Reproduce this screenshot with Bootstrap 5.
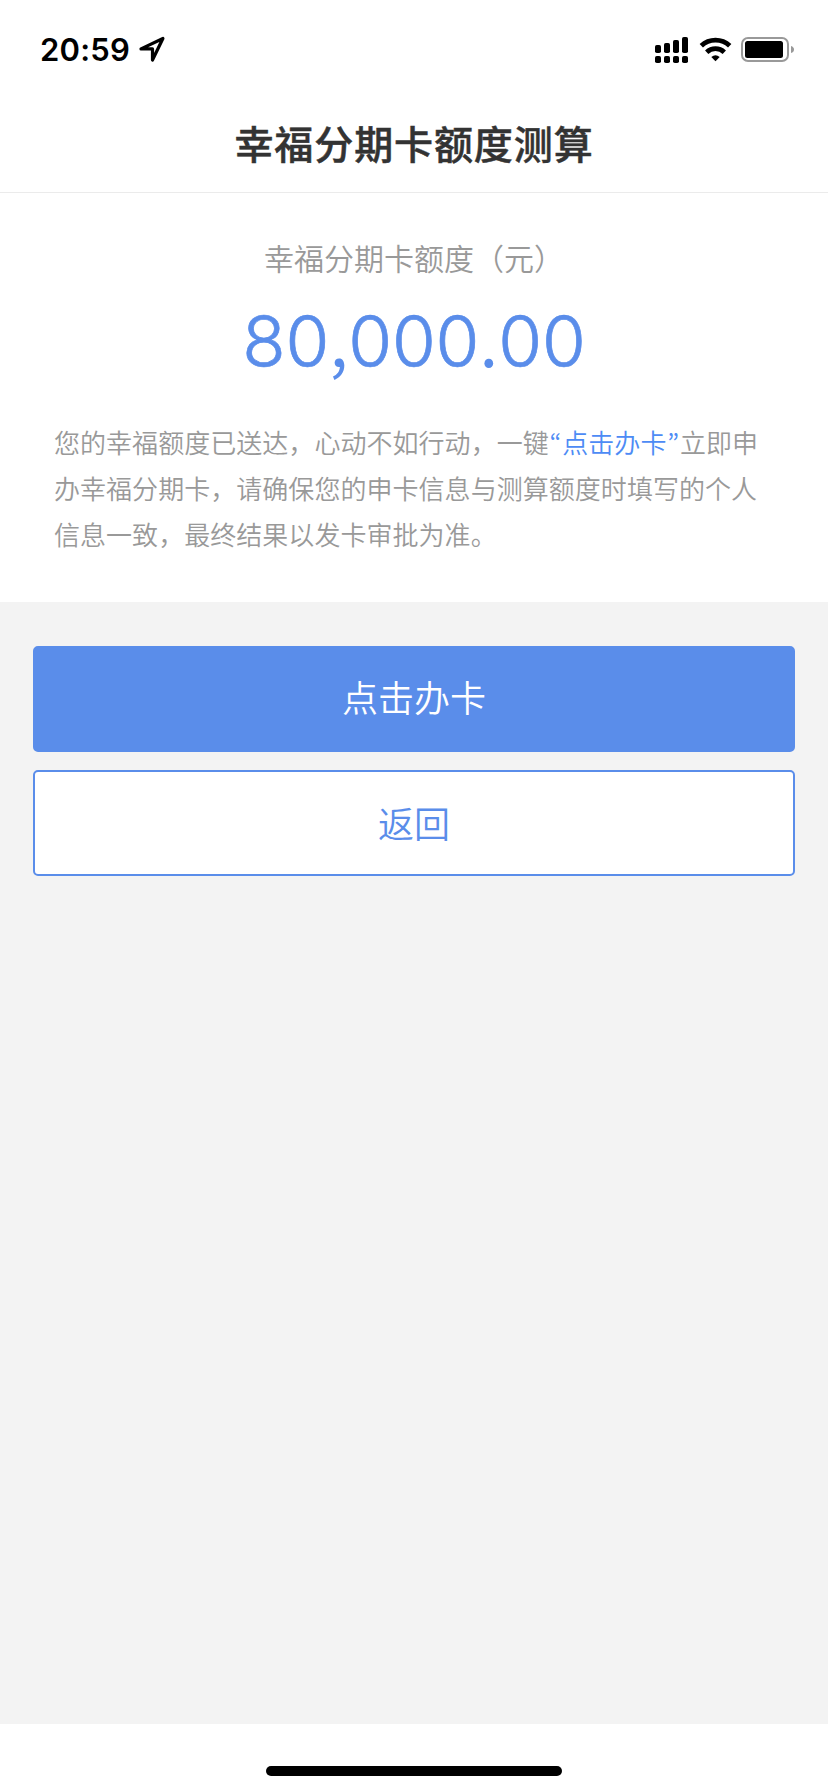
<!DOCTYPE html>
<html lang="zh-CN">
<head>
<meta charset="utf-8">
<meta name="viewport" content="width=device-width, initial-scale=1">
<title>幸福分期卡额度测算</title>
<link href="https://cdn.jsdelivr.net/npm/bootstrap@5.3.0/dist/css/bootstrap.min.css" rel="stylesheet">
<style>
  :root { --brand: #5a8dea; }
  body { font-family: "Noto Sans CJK SC", sans-serif; background: #f3f3f3; height: 1792px; overflow: hidden; }
  .status-bar { height: 96px; padding: 2px 34px 0 40px; color: #000; }
  .clock { font: 600 31px/1 Inter, sans-serif; letter-spacing: .2px; }
  .page-head { height: 97px; border-bottom: 1px solid #ebebeb; }
  .page-title { font-size: 39px; line-height: 56px; font-weight: 500; letter-spacing: .9px; color: #333; -webkit-text-stroke: .5px #333; padding-bottom: 4px; }
  .result { height: 409px; padding: 42px 54px 0; color: #999; }
  .result-label { font-size: 30px; line-height: 44px; font-weight: 350; }
  .amount { font: 300 71px/84px Inter, sans-serif; color: var(--brand); margin-top: 20px; -webkit-text-stroke: .7px var(--brand); letter-spacing: -.15px; }
  .amount-sep { font-family: "Noto Sans CJK SC", sans-serif; font-weight: 350; line-height: 1; -webkit-text-stroke: 0; }
  .note { font-size: 26px; line-height: 46px; font-weight: 350; letter-spacing: .04px; margin-top: 36px; }
  .note-key { color: #4d8bf5; }
  .quo { display: inline-block; width: 13.5px; text-align: center; font-family: "Noto Sans CJK KR", sans-serif; }
  .actions { padding: 44px 33px 0; gap: 18px; }
  .btn-action { height: 106px; border-width: 2px; border-radius: 5px; font-size: 36px; font-weight: 350; padding: 0 0 6px; --bs-btn-border-color: var(--brand); }
  .btn-solid { --bs-btn-bg: var(--brand); --bs-btn-color: #fff; }
  .btn-hollow { --bs-btn-bg: #fff; --bs-btn-color: var(--brand); padding-bottom: 3px; }
  .home-area { height: 68px; padding-top: 42px; }
  .home-bar { width: 296px; height: 10px; background: #000; }
</style>
</head>
<body class="d-flex flex-column">
<header class="bg-white">
  <div class="status-bar d-flex align-items-center justify-content-between">
    <div class="d-flex align-items-center">
      <span class="clock">20:59</span>
      <svg class="ms-2" width="28" height="28" viewBox="0 0 28 28" fill="none" stroke="#000" stroke-width="3.2" stroke-linejoin="round"><path d="M3 13.900 24.900 3.500 14.500 25V13.900Z"/></svg>
    </div>
    <svg width="140" height="28" viewBox="654 35 140 28">
      <g>
        <rect x="655" y="45" width="6" height="8" rx="1.8"/><rect x="664" y="43" width="6" height="10" rx="1.8"/><rect x="673" y="40" width="6" height="13" rx="1.8"/><rect x="682" y="37" width="6" height="16" rx="1.8"/>
        <rect x="655" y="56" width="6" height="7" rx="1.8"/><rect x="664" y="56" width="6" height="7" rx="1.8"/><rect x="673" y="56" width="6" height="7" rx="1.8"/><rect x="682" y="56" width="6" height="7" rx="1.8"/>
      </g>
      <g fill="none" stroke="#000" stroke-width="4.8"><path d="M701.300 45.800a20.500 20.500 0 0 1 28.400 0"/><path d="M706.700 52.200a12.800 12.800 0 0 1 17.600 0"/></g>
      <path d="m711.300 57q4.200-3.600 8.400 0L715.500 61.300Z"/>
      <rect x="742" y="38" width="46" height="23" rx="6" fill="none" stroke="#999" stroke-width="2"/>
      <rect x="745" y="41" width="38" height="17" rx="2.500"/>
      <path d="M791 46q3 1 3 3.500t-3 3.500Z" fill="#999"/>
    </svg>
  </div>
  <div class="page-head d-flex align-items-center justify-content-center"><h1 class="page-title m-0">幸福分期卡额度测算</h1></div>
</header>
<main class="flex-grow-1">
  <section class="result bg-white">
    <div class="result-label text-center">幸福分期卡额度（元）</div>
    <div class="amount text-center">80<span class="amount-sep">,</span>000<span class="amount-sep">.</span>00</div>
    <p class="note mb-0">您的幸福额度已送达，心动不如行动，一键<span class="note-key"><span class="quo">“</span>点击办卡<span class="quo">”</span></span>立即申<br>办幸福分期卡，请确保您的申卡信息与测算额度时填写的个人信息一致，最终结果以发卡审批为准。</p>
  </section>
  <div class="actions d-grid">
    <button type="button" class="btn btn-action btn-solid">点击办卡</button>
    <button type="button" class="btn btn-action btn-hollow">返回</button>
  </div>
</main>
<footer class="home-area bg-white"><div class="home-bar rounded-pill mx-auto"></div></footer>
<script src="https://cdn.jsdelivr.net/npm/bootstrap@5.3.0/dist/js/bootstrap.bundle.min.js"></script>
</body>
</html>
